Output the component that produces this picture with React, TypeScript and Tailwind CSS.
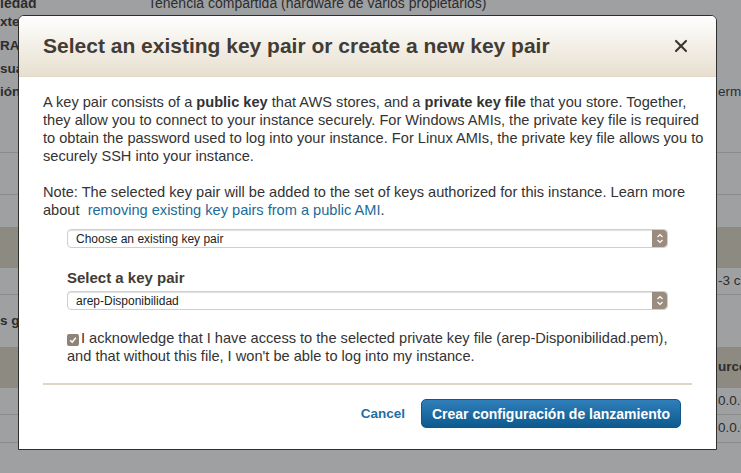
import { X } from 'lucide-react';

function SelectBox({ value }: { value: string }) {
  return (
    <div className="flex h-[19px] items-stretch rounded-[4px] border border-[#cfcfcf] bg-white shadow-[inset_0_1px_1px_rgba(0,0,0,0.12)]">
      <div className="flex flex-1 items-center pl-2 text-[12px] text-[#222]">{value}</div>
      <div className="flex w-[15px] items-center justify-center rounded-r-[4px] bg-[#9a8d80]">
        <svg width="8" height="11" viewBox="0 0 8 11" fill="none" stroke="white" strokeWidth="1.2">
          <path d="M1.5 4 L4 1.5 L6.5 4" />
          <path d="M1.5 7 L4 9.5 L6.5 7" />
        </svg>
      </div>
    </div>
  );
}

function BgRow({
  h,
  left,
  right,
  band,
  line,
  rightBold,
}: {
  h: number;
  left?: string;
  right?: string;
  band?: boolean;
  line?: boolean;
  rightBold?: boolean;
}) {
  return (
    <div
      className={`flex items-center ${band ? 'bg-[#8d8b81]' : ''} ${line ? 'border-b border-[#8b8b8b]' : ''}`}
      style={{ height: h }}
    >
      <div className="w-[716px] shrink-0 text-[13.5px] font-bold text-[#2d2d2d]">{left}</div>
      <div className={`pl-[2px] text-[13.5px] text-[#2d2d2d] ${rightBold ? 'font-bold' : ''}`}>{right}</div>
    </div>
  );
}

export default function App() {
  return (
    <div className="relative h-[473px] w-[741px] overflow-hidden bg-[#9fa0a2] font-['Liberation_Sans',Arial,sans-serif]">
      {/* dimmed page behind the modal */}
      <div className="flex flex-col">
        <div className="flex h-[10px] items-end text-[14px] leading-none text-[#2d2d2d]">
          <span className="w-[148px] font-bold">iedad</span>
          <span>Tenencia compartida (hardware de varios propietarios)</span>
        </div>
        <BgRow h={24} left="xterr" />
        <BgRow h={24} left="RA" />
        <BgRow h={23} left="sua" />
        <BgRow h={22} left="ión" right="ermi" />
        <BgRow h={50} line />
        <BgRow h={42} line />
        <div className="h-[32px]" />
        <BgRow h={41} band />
        <BgRow h={27} right="-3 c" line />
        <BgRow h={52} left="s g" />
        <BgRow h={41} band right="urce" rightBold />
        <BgRow h={27} right="0.0.0" line />
        <BgRow h={28} right="0.0.0" line />
      </div>

      {/* modal */}
      <div className="absolute left-[18px] top-[15px] flex h-[435px] w-[699px] flex-col overflow-hidden rounded-t-[6px] border border-[#2e2e2e] bg-white">
        <div className="flex h-[61px] shrink-0 items-center justify-between border-b border-[#e2d8c6] bg-gradient-to-b from-white to-[#e7dfcf] pl-[24px] pr-[25px]">
          <h1 className="text-[21px] font-bold text-[#423c35]">
            Select an existing key pair or create a new key pair
          </h1>
          <X className="h-[20px] w-[20px] text-[#3d3630]" strokeWidth={2.6} />
        </div>

        <div className="flex flex-col px-[24px] pt-[16px] text-[14.6px] leading-[18px] text-[#333]">
          <p className="whitespace-nowrap">
            A key pair consists of a <b>public key</b> that AWS stores, and a <b>private key file</b> that you store. Together,
            <br />
            they allow you to connect to your instance securely. For Windows AMIs, the private key file is required
            <br />
            to obtain the password used to log into your instance. For Linux AMIs, the private key file allows you to
            <br />
            securely SSH into your instance.
          </p>
          <p className="mt-[18px] whitespace-nowrap">
            Note: The selected key pair will be added to the set of keys authorized for this instance. Learn more
            <br />
            about&nbsp; <span className="text-[#1c6b96]">removing existing key pairs from a public AMI</span>.
          </p>

          <div className="mt-[10px] flex flex-col px-[24px]">
            <SelectBox value="Choose an existing key pair" />
            <div className="mt-[21px] text-[15px] font-bold leading-[18px] text-[#423c35]">Select a key pair</div>
            <div className="mt-[4px]">
              <SelectBox value="arep-Disponibilidad" />
            </div>
          </div>

          <div className="mt-[19px] whitespace-nowrap pl-[24px]">
            <span className="mr-[2px] inline-flex h-[12px] w-[12px] items-center justify-center rounded-[2px] bg-[#8f8378] align-[-1px]">
              <svg width="8" height="8" viewBox="0 0 8 8" fill="none" stroke="white" strokeWidth="1.5">
                <path d="M1.2 4.2 L3.2 6.2 L6.8 1.8" />
              </svg>
            </span>
            I acknowledge that I have access to the selected private key file (arep-Disponibilidad.pem),
            <br />
            and that without this file, I won't be able to log into my instance.
          </div>

          <div className="mt-[18px] h-[2px] bg-[#e0d6c6]" />

          <div className="mt-[14px] flex items-center justify-end gap-[16px] pr-[11px]">
            <span className="text-[13.5px] font-bold text-[#1f6ea6]">Cancel</span>
            <button className="h-[29px] rounded-[5px] border border-[#0f5789] bg-gradient-to-b from-[#2f7fba] to-[#0b5a8f] px-[10px] text-[14px] font-bold text-white">
              Crear configuración de lanzamiento
            </button>
          </div>
        </div>
      </div>
    </div>
  );
}
